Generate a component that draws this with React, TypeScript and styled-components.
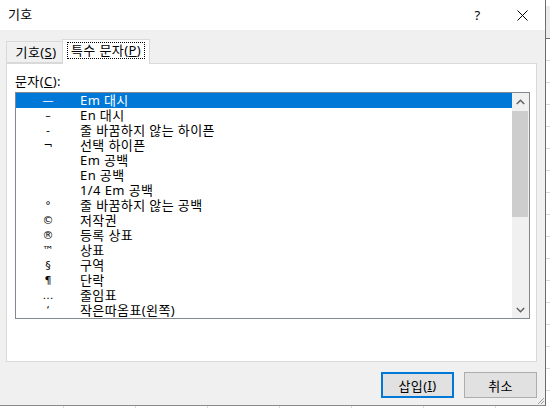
import React from 'react';
import styled, { createGlobalStyle } from 'styled-components';

const GlobalStyle = createGlobalStyle`
  html, body {
    margin: 0;
    padding: 0;
    width: 550px;
    height: 408px;
    overflow: hidden;
  }
  body {
    font-family: 'Segoe UI', 'Noto Sans', 'Noto Sans CJK KR', sans-serif;
    font-size: 13px;
    letter-spacing: 0.4px;
    color: #000;
    background-color: #fff;
    background-image:
      linear-gradient(to bottom, #fff 0 6px, #ececec 6px 38px, #6d6d6d 38px 39px, transparent 39px),
      repeating-linear-gradient(to bottom, transparent 0 16px, #d9d9d9 16px 17px, transparent 17px 22px),
      repeating-linear-gradient(to right, transparent 0 63px, #d9d9d9 63px 64px, transparent 64px 72px);
  }
`;

const Dialog = styled.div`
  position: relative;
  width: 546px;
  height: 406px;
  box-sizing: border-box;
  border-right: 1px solid #6d6d6d;
  border-bottom: 1px solid #8a8a8a;
  background: #f0f0f0;
  display: flex;
  flex-direction: column;
`;

const TitleBar = styled.div`
  height: 30px;
  background: #fff;
  display: flex;
  align-items: center;
  padding-left: 8px;
`;

const Title = styled.span`
  flex: 1;
  line-height: 16px;
  margin-top: -2px;
`;

const WinButton = styled.div`
  width: 45px;
  height: 30px;
  display: flex;
  align-items: center;
  justify-content: center;
  font-size: 13px;
`;

const Body = styled.div`
  flex: 1;
  display: flex;
  flex-direction: column;
  padding: 8px 8px 0 6px;
`;

const TabRow = styled.div`
  display: flex;
  align-items: flex-end;
  height: 25px;
  position: relative;
  z-index: 1;
`;

const Tab = styled.div<{ $active?: boolean }>`
  box-sizing: border-box;
  height: ${(p) => (p.$active ? '25px' : '22px')};
  width: ${(p) => (p.$active ? '88px' : '56px')};
  padding-left: ${(p) => (p.$active ? '0' : '3px')};
  justify-content: center;
  border: 1px solid #d9d9d9;
  border-bottom: ${(p) => (p.$active ? 'none' : '1px solid #d9d9d9')};
  border-right: ${(p) => (p.$active ? '1px solid #d9d9d9' : 'none')};
  background: ${(p) => (p.$active ? '#fff' : '#f0f0f0')};
  margin-bottom: ${(p) => (p.$active ? '-1px' : '0')};
  display: flex;
  align-items: center;
  line-height: 16px;
  white-space: nowrap;
`;

const FocusRect = styled.span`
  box-sizing: border-box;
  width: 78px;
  height: 17px;
  margin-top: -3px;
  border: 1px dotted #000;
  display: flex;
  align-items: center;
  justify-content: center;
  line-height: 15px;
`;

const Key = styled.u`
  text-decoration-thickness: 1px;
  text-underline-offset: 1px;
`;

const Panel = styled.div`
  box-sizing: border-box;
  width: 531px;
  height: 299px;
  border: 1px solid #d9d9d9;
  background: #fff;
  padding: 9px 0 0 8px;
`;

const Label = styled.div`
  line-height: 16px;
  margin-bottom: 3px;
`;

const ListBox = styled.div`
  box-sizing: border-box;
  width: 515px;
  height: 227px;
  border: 1px solid #828790;
  display: flex;
  background: #fff;
`;

const Rows = styled.div`
  flex: 1;
  display: flex;
  flex-direction: column;
`;

const Row = styled.div<{ $selected?: boolean }>`
  height: 15px;
  display: grid;
  grid-template-columns: 64px 1fr;
  align-items: center;
  background: ${(p) => (p.$selected ? '#0078d7' : 'transparent')};
  color: ${(p) => (p.$selected ? '#fff' : '#000')};
  line-height: 15px;
  white-space: nowrap;
`;

const Sym = styled.span`
  text-align: center;
  font-family: 'DejaVu Sans', 'Noto Sans', sans-serif;
  font-size: 11px;
  letter-spacing: 0;
`;

const Name = styled.span``;

const ScrollBar = styled.div`
  width: 17px;
  background: #f0f0f0;
  display: flex;
  flex-direction: column;
`;

const Arrow = styled.div`
  height: 17px;
  display: flex;
  align-items: center;
  justify-content: center;
`;

const Track = styled.div`
  flex: 1;
  display: flex;
  flex-direction: column;
`;

const Thumb = styled.div`
  height: 106px;
  margin: 1px 1px 0 0;
  background: #cdcdcd;
`;

const Footer = styled.div`
  display: flex;
  justify-content: flex-end;
  gap: 10px;
  margin-top: 10px;
`;

const Button = styled.div<{ $default?: boolean }>`
  box-sizing: border-box;
  width: 73px;
  height: 26px;
  background: #e1e1e1;
  border: ${(p) => (p.$default ? '2px solid #0078d7' : '1px solid #adadad')};
  display: flex;
  align-items: center;
  justify-content: center;
`;

const Grip = styled.svg`
  position: absolute;
  right: 0;
  bottom: 0;
`;

const items: [string, string][] = [
  ['—', 'Em 대시'],
  ['–', 'En 대시'],
  ['-', '줄 바꿈하지 않는 하이픈'],
  ['¬', '선택 하이픈'],
  ['', 'Em 공백'],
  ['', 'En 공백'],
  ['', '1/4 Em 공백'],
  ['°', '줄 바꿈하지 않는 공백'],
  ['©', '저작권'],
  ['®', '등록 상표'],
  ['™', '상표'],
  ['§', '구역'],
  ['¶', '단락'],
  ['…', '줄임표'],
  ['‘', '작은따옴표(왼쪽)'],
];

const App: React.FC = () => {
  return (
    <>
      <GlobalStyle />
      <Dialog>
        <TitleBar>
          <Title>기호</Title>
          <WinButton>?</WinButton>
          <WinButton>
            <svg width="11" height="11" viewBox="0 0 11 11">
              <path d="M0.5 0.5 L10.5 10.5 M10.5 0.5 L0.5 10.5" stroke="#000" strokeWidth="1" />
            </svg>
          </WinButton>
        </TitleBar>
        <Body>
          <TabRow>
            <Tab>
              기호(<Key>S</Key>)
            </Tab>
            <Tab $active>
              <FocusRect>
                특수 문자(<Key>P</Key>)
              </FocusRect>
            </Tab>
          </TabRow>
          <Panel>
            <Label>
              문자(<Key>C</Key>):
            </Label>
            <ListBox>
              <Rows>
                {items.map(([sym, name], i) => (
                  <Row key={name} $selected={i === 0}>
                    <Sym>{sym}</Sym>
                    <Name>{name}</Name>
                  </Row>
                ))}
              </Rows>
              <ScrollBar>
                <Arrow>
                  <svg width="9" height="6" viewBox="0 0 9 6">
                    <path d="M0.8 5 L4.5 1.3 L8.2 5" fill="none" stroke="#606060" strokeWidth="1.5" />
                  </svg>
                </Arrow>
                <Track>
                  <Thumb />
                </Track>
                <Arrow>
                  <svg width="9" height="6" viewBox="0 0 9 6">
                    <path d="M0.8 1 L4.5 4.7 L8.2 1" fill="none" stroke="#606060" strokeWidth="1.5" />
                  </svg>
                </Arrow>
              </ScrollBar>
            </ListBox>
          </Panel>
          <Footer>
            <Button $default>
              삽입(<Key>I</Key>)
            </Button>
            <Button>취소</Button>
          </Footer>
        </Body>
        <Grip width="9" height="9" viewBox="0 0 9 9">
          <path d="M8 2 L2 8 M8 5 L5 8" stroke="#9a9a9a" strokeWidth="1" />
        </Grip>
      </Dialog>
    </>
  );
};

export default App;
